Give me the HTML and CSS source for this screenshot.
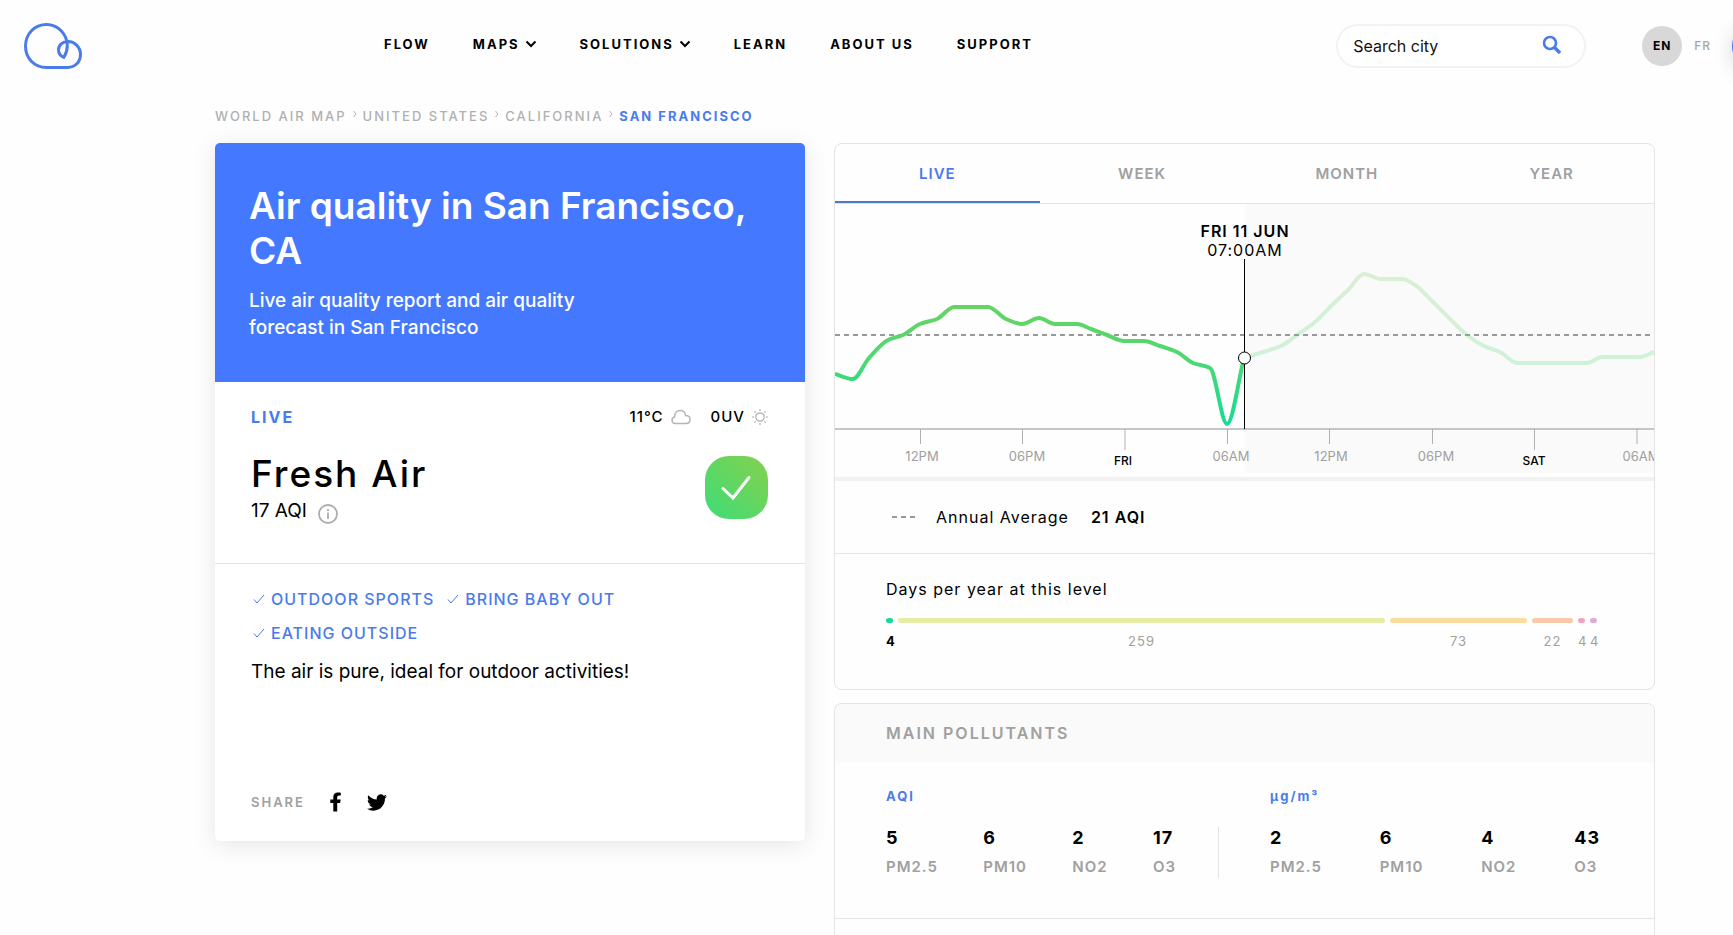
FILE: index.html
```html
<!DOCTYPE html>
<html lang="en">
<head>
<meta charset="utf-8">
<meta name="viewport" content="width=device-width, initial-scale=1">
<title>Air quality in San Francisco, CA</title>
<link rel="stylesheet" href="styles.css">
</head>
<body>
<div class="page">
  <header class="header">
    <a class="logo" href="#" aria-label="Home">
      <svg width="58" height="46" viewBox="24 22 58 46" fill="none" stroke="#4a7bec" stroke-width="3" stroke-linejoin="round"><path d="M67.500 66.500H46.500C34 66.500 25.500 57 25.500 45S34.500 23.500 46.500 23.500C58 23.500 67 33 67.300 44.500C67.300 49 66 53 63.800 56.500C60.500 55 58.500 52.500 58.500 49C58.500 44 62.500 40.500 68 40.500C75 40.500 80.500 46.500 80.500 53.500C80.500 61 75 66.500 67.500 66.500Z"/></svg>
    </a>
    <nav class="nav" aria-label="Main">
      <a href="#">FLOW</a>
      <a href="#">MAPS <svg class="caret" width="12" height="8" viewBox="0 0 12 8"><path d="M1.500 1.500L6 6L10.500 1.500"/></svg></a>
      <a href="#">SOLUTIONS <svg class="caret" width="12" height="8" viewBox="0 0 12 8"><path d="M1.500 1.500L6 6L10.500 1.500"/></svg></a>
      <a href="#">LEARN</a>
      <a href="#">ABOUT US</a>
      <a href="#">SUPPORT</a>
    </nav>
    <form class="search">
      <input type="text" placeholder="Search city" aria-label="Search city">
      <button type="button" aria-label="Search"><svg width="20" height="20" viewBox="0 0 20 20" fill="none" stroke="#4a7bec"><circle cx="8" cy="8" r="6" stroke-width="2.600"/><path d="M12.500 12.500L18 18" stroke-width="3.600"/></svg></button>
    </form>
    <div class="languages">
      <a class="language language-current" href="#">EN</a>
      <a class="language" href="#">FR</a>
    </div>
    <button class="drawer" type="button" aria-label="Open panel"></button>
  </header>

  <nav class="crumbs" aria-label="Breadcrumb">
    <a href="#">WORLD AIR MAP</a>
    <svg width="4" height="8" viewBox="0 0 4 8"><path d="M.5 1L3 4L.5 7"/></svg>
    <a href="#">UNITED STATES</a>
    <svg width="4" height="8" viewBox="0 0 4 8"><path d="M.5 1L3 4L.5 7"/></svg>
    <a href="#">CALIFORNIA</a>
    <svg width="4" height="8" viewBox="0 0 4 8"><path d="M.5 1L3 4L.5 7"/></svg>
    <a class="crumb-current" href="#">SAN FRANCISCO</a>
  </nav>

  <main class="main">
    <section class="city">
      <div class="city-head">
        <h1>Air quality in San Francisco, CA</h1>
        <p>Live air quality report and air quality forecast in San Francisco</p>
      </div>
      <div class="city-live">
        <div class="live-top">
          <span class="live-label">LIVE</span>
          <span class="weather">11°C
            <svg width="20" height="16" viewBox="0 0 20 16" fill="none" stroke="#b5b5b5" stroke-width="1.500"><path d="M4.500 14.500C2.300 14.500 1 13 1 11.200C1 9.500 2 8.300 3.600 7.900C3.600 4.200 5.800 1.500 9.200 1.500C12.200 1.500 14.300 3.500 14.600 6.500C17.200 6.500 19 8.200 19 10.500C19 12.900 17.300 14.500 15 14.500Z"/></svg>
          </span>
          <span class="weather">0UV
            <svg width="16" height="16" viewBox="0 0 16 16" fill="none" stroke="#b0b0b0" stroke-width="1.200"><circle cx="8" cy="8" r="4.200"/><path d="M8 0V2M8 14V16M0 8H2M14 8H16M2.300 2.300L3.700 3.700M12.300 12.300L13.700 13.700M2.300 13.700L3.700 12.300M12.300 3.700L13.700 2.300"/></svg>
          </span>
        </div>
        <div class="live-main">
          <div>
            <h2>Fresh Air</h2>
            <div class="aqi">17 AQI
              <svg width="20" height="20" viewBox="0 0 20 20" fill="none" stroke="#adadad" stroke-width="1.800"><circle cx="10" cy="10" r="9"/><path d="M10 8.500V15M10 5V7"/></svg>
            </div>
          </div>
          <svg class="badge" width="64" height="64" viewBox="0 0 64 64">
            <defs><linearGradient id="badge" x1="0" y1="1" x2="1" y2="0"><stop offset="0" stop-color="#3fdc78"/><stop offset="1" stop-color="#84d14c"/></linearGradient></defs>
            <rect width="63" height="63" rx="24" fill="url(#badge)"/>
            <path d="M18 32.500L28 42L44 21.500" fill="none" stroke="#fff" stroke-width="3" stroke-linecap="round"/>
          </svg>
        </div>
      </div>
      <div class="city-advice">
        <ul class="tags">
          <li><svg class="tick" width="12" height="10" viewBox="0 0 12 10"><path d="M1 5.500L4 9L11 1"/></svg>OUTDOOR SPORTS</li>
          <li><svg class="tick" width="12" height="10" viewBox="0 0 12 10"><path d="M1 5.500L4 9L11 1"/></svg>BRING BABY OUT</li>
          <li><svg class="tick" width="12" height="10" viewBox="0 0 12 10"><path d="M1 5.500L4 9L11 1"/></svg>EATING OUTSIDE</li>
        </ul>
        <p>The air is pure, ideal for outdoor activities!</p>
        <div class="share">
          <span>SHARE</span>
          <a href="#" aria-label="Facebook"><svg width="12" height="20" viewBox="0 0 12 20"><path d="M3.300 19.500V11H.3V7.600H3.300V5C3.300 2 5 .5 7.800 .5C9.200 .5 10.800 .7 10.800 .7V3.600H9.200C7.700 3.600 7.200 4.500 7.200 5.500V7.600H10.700L10.100 11H7.200V19.500Z"/></svg></a>
          <a href="#" aria-label="Twitter"><svg width="20" height="17" viewBox="0 0 24 20"><path d="M23.950 2.570a10 10 0 0 1-2.820.77 4.960 4.960 0 0 0 2.160-2.720c-.95.560-2.010.960-3.130 1.190a4.920 4.920 0 0 0-8.380 4.480C7.690 6.090 4.070 4.130 1.640 1.160a4.820 4.820 0 0 0-.67 2.480c0 1.710.87 3.210 2.190 4.100a4.900 4.900 0 0 1-2.230-.62v.06a4.920 4.920 0 0 0 3.950 4.830 5 5 0 0 1-2.210.08 4.940 4.940 0 0 0 4.600 3.420A9.870 9.870 0 0 1 0 17.540a14 14 0 0 0 7.550 2.210c9.050 0 14-7.500 14-13.980 0-.21 0-.42-.02-.63a9.940 9.940 0 0 0 2.460-2.550z"/></svg></a>
        </div>
      </div>
    </section>

    <div class="details">
      <section class="card">
        <div class="tabs" role="tablist">
          <button class="tab tab-active" type="button" role="tab" aria-selected="true">LIVE</button>
          <button class="tab" type="button" role="tab">WEEK</button>
          <button class="tab" type="button" role="tab">MONTH</button>
          <button class="tab" type="button" role="tab">YEAR</button>
        </div>
        <svg class="chart" viewBox="0 0 819 273">
          <defs><linearGradient id="level" gradientUnits="userSpaceOnUse" x1="0" y1="60" x2="0" y2="224"><stop offset="0" stop-color="#78d058"/><stop offset=".55" stop-color="#50d870"/><stop offset="1" stop-color="#12dc98"/></linearGradient></defs>
          <rect class="future" x="410" y="0" width="409" height="269"/>
          <path class="average" d="M0 131H819"/>
          <path class="curve curve-forecast" id="forecast"/>
          <path class="curve" id="history"/>
          <path class="axis" d="M0 225H819"/>
          <path class="axis-tick" d="M85.500 225V240M187.500 225V240M290 225V246M392.500 225V240M494.500 225V240M597.500 225V240M699.500 225V246M802 225V240"/>
          <g class="hours"><text x="87" y="257">12PM</text><text x="192" y="257">06PM</text><text x="396" y="257">06AM</text><text x="496" y="257">12PM</text><text x="601" y="257">06PM</text><text x="806" y="257">06AM</text></g>
          <g class="days"><text x="288" y="261">FRI</text><text x="699" y="261">SAT</text></g>
          <path class="cursor" d="M409.500 55V225"/>
          <circle class="cursor-dot" cx="409.500" cy="154" r="6"/>
          <text class="cursor-day" x="410" y="33">FRI 11 JUN</text>
          <text class="cursor-hour" x="410" y="52">07:00AM</text>
        </svg>
        <div class="average-row">
          <svg width="24" height="2" viewBox="0 0 24 2"><path class="average" d="M0 1H24"/></svg>
          <span>Annual Average</span><strong>21 AQI</strong>
        </div>
        <div class="levels">
          <h3>Days per year at this level</h3>
          <div class="bars">
            <div class="level level-fresh" style="flex-grow:7">4</div>
            <div class="level level-moderate" style="flex-grow:487">259</div>
            <div class="level level-high" style="flex-grow:137">73</div>
            <div class="level level-very-high" style="flex-grow:41">22</div>
            <div class="level level-excessive" style="flex-grow:7">4</div>
            <div class="level level-extreme" style="flex-grow:7">4</div>
          </div>
        </div>
      </section>

      <section class="card pollutants">
        <h3>MAIN POLLUTANTS</h3>
        <div class="units">
          <div class="unit">
            <h4>AQI</h4>
            <dl>
              <div><dt>PM2.5</dt><dd>5</dd></div><div><dt>PM10</dt><dd>6</dd></div><div><dt>NO2</dt><dd>2</dd></div><div><dt>O3</dt><dd>17</dd></div>
            </dl>
          </div>
          <div class="unit">
            <h4>µg/m³</h4>
            <dl>
              <div><dt>PM2.5</dt><dd>2</dd></div><div><dt>PM10</dt><dd>6</dd></div><div><dt>NO2</dt><dd>4</dd></div><div><dt>O3</dt><dd>43</dd></div>
            </dl>
          </div>
        </div>
      </section>
    </div>
  </main>
</div>
<script src="chart.js"></script>
</body>
</html>
```
FILE: styles.css
```css
* { box-sizing: border-box; }
body { margin: 0; background: #fefefe; color: #000; font-family: Inter, "Open Sans", sans-serif; }
h1, h2, h3, h4, p, ul, dl, dd { margin: 0; padding: 0; }
a { color: inherit; text-decoration: none; }
button { border: 0; padding: 0; background: none; font: inherit; cursor: pointer; }
svg { display: block; flex: none; }

.page { display: flex; flex-direction: column; min-height: 100vh; overflow: hidden; }

.header { position: relative; display: flex; align-items: center; height: 91px; padding: 0 18px 0 24px; }
.nav { display: flex; gap: 43px; margin: 0 auto 3px 302px; font-size: 13px; font-weight: 700; letter-spacing: 2px; white-space: nowrap; }
.nav a { display: flex; align-items: center; gap: 5px; line-height: 16px; }
.caret { fill: none; stroke: #000; stroke-width: 2; }
.search { display: flex; align-items: center; width: 250px; height: 44px; padding: 0 22px 0 15px; border: 2px solid #f2f2f2; border-radius: 22px; background: #fff; }
.search input { flex: 1; min-width: 0; border: 0; padding: 0; outline: 0; background: none; font: 16px/20px Inter, sans-serif; }
.search input::placeholder { color: #111; }
.search button { margin-bottom: 2px; }
.languages { display: flex; align-items: center; gap: 8px; margin-left: 56px; font-size: 12px; letter-spacing: 1px; }
.language { color: #a8a8a8; font-weight: 500; padding: 0 4px; }
.language-current { width: 40px; line-height: 40px; padding: 0; border-radius: 50%; background: #d8d8d8; color: #000; font-weight: 700; text-align: center; }
.drawer { position: absolute; right: -49px; top: 21px; width: 50px; height: 50px; border-radius: 50%; background: #4478ff; box-shadow: 0 4px 20px rgba(0, 0, 0, .15); }

.crumbs { display: flex; align-items: center; gap: 6px; height: 52px; padding: 0 78px 3px 215px; color: #b0b0b0; font-size: 13px; font-weight: 500; letter-spacing: 2px; }
.crumbs svg { fill: none; stroke: #b0b0b0; margin-bottom: 3px; }
.crumb-current { color: #4a7bec; font-weight: 700; }

.main { flex: 1; display: grid; grid-template-columns: 590fr 821fr; gap: 29px; padding: 0 78px 0 215px; }
.city { align-self: start; overflow: hidden; border-radius: 5px; background: #fff; box-shadow: 0 4px 24px rgba(0, 0, 0, .1); }
.city-head { padding: 40px 34px 41px; background: #4478ff; color: #fff; }
.city-head h1 { font-size: 37px; font-weight: 600; line-height: 45px; }
.city-head p { max-width: 380px; margin-top: 14px; font-size: 19px; font-weight: 500; line-height: 27px; }
.city-live { padding: 24px 37px 38px 36px; border-bottom: 1px solid #e2e2e2; }
.live-top { display: flex; align-items: center; gap: 20px; font-size: 15px; line-height: 22px; }
.live-label { margin-right: auto; color: #4a7bec; font-size: 16px; font-weight: 700; letter-spacing: 2px; }
.weather { display: flex; align-items: center; gap: 7px; font-weight: 500; letter-spacing: 1px; }
.live-main { display: flex; align-items: flex-start; justify-content: space-between; padding-top: 23px; }
.live-main h2 { font-size: 37px; font-weight: 500; line-height: 46px; letter-spacing: 2px; }
.aqi { display: flex; gap: 11px; font-size: 19px; line-height: 28px; }
.aqi svg { margin-top: 7px; }
.badge { margin-top: 5px; margin-right: -1px; }
.city-advice { padding: 18px 36px 28px; }
.tags { display: flex; flex-wrap: wrap; column-gap: 11px; max-width: 420px; color: #4a7bec; list-style: none; font-size: 16px; font-weight: 500; line-height: 34px; letter-spacing: 1px; }
.tags li { display: flex; align-items: center; gap: 6px; padding-left: 2px; }
.tick { fill: none; stroke: #4a7bec; }
.city-advice p { margin-top: 9px; font-size: 19px; line-height: 26px; }
.share { display: flex; align-items: center; gap: 25px; margin-top: 106px; color: #a0a0a0; font-size: 13px; font-weight: 600; line-height: 22px; letter-spacing: 2px; }
.share a { color: #000; }
.share svg { fill: currentColor; }

.details { display: flex; flex-direction: column; gap: 13px; min-width: 0; }
.card { overflow: hidden; border: 1px solid #e3e3e3; border-radius: 8px; background: #fefefe; }
.tabs { display: grid; grid-template-columns: repeat(4, 1fr); border-bottom: 1px solid #e3e3e3; }
.tab { height: 59px; padding-top: 2px; border-bottom: 2px solid transparent; color: #a0a0a0; font-size: 15px; font-weight: 600; letter-spacing: 1px; }
.tab-active { border-color: #4a78cc; color: #4a7bec; }

.chart { width: 100%; border-bottom: 4px solid #f1f1f1; box-sizing: content-box; }
.chart text { text-anchor: middle; }
.future { fill: #fafafa; }
.average { fill: none; stroke: #999; stroke-width: 2; stroke-dasharray: 5 4; }
.curve { fill: none; stroke: url(#level); stroke-width: 4; }
.curve-forecast { opacity: .25; }
.axis { stroke: #c6c6c6; stroke-width: 2; }
.axis-tick { stroke: #b0b0b0; }
.hours { fill: #a0a0a0; font-size: 13px; }
.days { fill: #000; font-size: 12px; font-weight: 500; }
.cursor { stroke: #000; }
.cursor-dot { fill: #fff; stroke: #000; }
.cursor-day, .cursor-hour { font-size: 16px; letter-spacing: 1px; }
.cursor-day { font-weight: 600; }

.average-row { display: flex; align-items: center; height: 73px; padding: 0 57px; border-bottom: 1px solid #e3e3e3; font-size: 16px; letter-spacing: 1px; }
.average-row span { margin: 0 22px 0 20px; }
.average-row strong { font-weight: 600; }
.levels { padding: 24px 57px 38px 51px; }
.levels h3 { font-size: 16px; font-weight: 400; line-height: 22px; letter-spacing: 1px; }
.bars { display: flex; gap: 5px; margin-top: 18px; }
.level { flex: 1 1 0; min-width: 0; color: #a0a0a0; font-size: 13px; line-height: 20px; letter-spacing: 1px; text-align: center; }
.level::before { content: ""; display: block; height: 5px; margin-bottom: 8px; border-radius: 3px; background: currentColor; }
.level-fresh { color: #000; font-weight: 700; }
.level-fresh::before { background: #14d997; }
.level-moderate::before { background: #e6eca6; }
.level-high::before { background: #fcdb9e; }
.level-very-high::before { background: #f9c9aa; }
.level-excessive::before { background: #f5a3b8; }
.level-extreme::before { background: #e2a8da; }

.pollutants { flex: 1; border-bottom: 0; border-radius: 8px 8px 0 0; }
.pollutants h3 { padding: 0 51px; background: #fafafa; color: #a0a0a0; font-size: 16px; font-weight: 600; line-height: 59px; letter-spacing: 2px; }
.units { display: grid; grid-template-columns: 333fr 381fr; padding: 22px 54px 40px 51px; border-bottom: 1px solid #e3e3e3; }
.unit h4 { color: #4a7bec; font-size: 13px; font-weight: 700; line-height: 22px; letter-spacing: 2px; }
.unit dl { display: flex; justify-content: space-between; margin-top: 20px; }
.unit dl > div { display: flex; flex-direction: column-reverse; }
.unit dt { padding-top: 7px; color: #a0a0a0; font-size: 15px; font-weight: 600; line-height: 22px; letter-spacing: 1px; }
.unit dd { font-size: 18px; font-weight: 700; line-height: 22px; letter-spacing: 1px; }
.unit:first-child dl { padding-right: 42px; border-right: 1px solid #e3e3e3; }
.unit:last-child { padding-left: 51px; }
```
FILE: chart.js
```js
// Points are [x, y] in the chart's viewBox units.
const history = [[0,170],[18,175],[34,154],[53,136],[68,131],[85,120],[102,115],[119,103],[153,103],[171,115],[187,120],[204,114],[220,120],[242,120],[256,125],[272,131],[289,137],[309,137],[325,142],[342,148],[358,159],[375,164],[392,220],[409,154]];
const forecast = [[409,154],[428,148],[446,142],[462,131],[480,118],[496,102],[513,86],[529,70],[546,75],[567,75],[580,81],[598,98],[615,115],[632,131],[649,142],[665,148],[682,159],[752,159],[767,153],[805,153],[819,148]];

// Smooth path that never overshoots its points.
function smooth(points) {
  const slope = i => (points[i + 1][1] - points[i][1]) / (points[i + 1][0] - points[i][0]);
  const tangent = i => {
    if (i === 0) return slope(0);
    if (i === points.length - 1) return slope(i - 1);
    const a = slope(i - 1), b = slope(i);
    return a * b <= 0 ? 0 : 2 * a * b / (a + b);
  };
  let d = `M${points[0]}`;
  for (let i = 1; i < points.length; i++) {
    const [x0, y0] = points[i - 1], [x1, y1] = points[i], h = (x1 - x0) / 3;
    d += `C${x0 + h},${y0 + h * tangent(i - 1)} ${x1 - h},${y1 - h * tangent(i)} ${x1},${y1}`;
  }
  return d;
}

document.getElementById("history").setAttribute("d", smooth(history));
document.getElementById("forecast").setAttribute("d", smooth(forecast));
```
